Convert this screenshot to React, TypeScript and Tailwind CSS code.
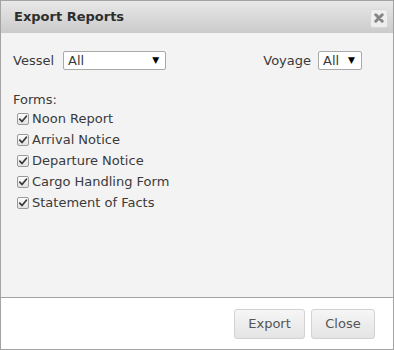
import React from 'react';

const forms = ['Noon Report', 'Arrival Notice', 'Departure Notice', 'Cargo Handling Form', 'Statement of Facts'];

const Check: React.FC = () => (
  <span className="w-[12px] h-[12px] rounded-[2px] border border-[#9a9a9a] bg-gradient-to-b from-[#fdfdfd] to-[#e2e2e2] flex items-center justify-center shrink-0">
    <svg width="10" height="10" viewBox="0 0 10 10">
      <path d="M1.8 5.2 L4 7.5 L8.4 2.2" fill="none" stroke="#3a3a3a" strokeWidth="1.8" strokeLinecap="round" strokeLinejoin="round" />
    </svg>
  </span>
);

const Select: React.FC<{ width: string }> = ({ width }) => (
  <div className={`${width} h-[19px] bg-white border border-[#a9a9a9] rounded-[2px] flex items-center justify-between pl-[4px] pr-[6px] text-[#3a3a3a]`}>
    <span>All</span>
    <span className="text-[9px] text-black leading-none">▼</span>
  </div>
);

export default function App() {
  return (
    <div className="w-[394px] h-[350px] border border-[#a3a3a3] flex flex-col font-['DejaVu_Sans',sans-serif] text-[13px] text-[#3a3a3a]">
      <div className="h-[32px] shrink-0 bg-gradient-to-b from-[#e8e8e8] to-[#cbcbcb] flex items-center justify-between pl-[13px] pr-[5px]">
        <span className="font-bold text-[#2e2e2e]">Export Reports</span>
        <div className="w-[18px] h-[19px] mt-[2px] rounded-[3px] border border-[#d8d8d8] bg-[#eeeeee] flex items-center justify-center">
          <svg width="10" height="10" viewBox="0 0 10 10">
            <path d="M1.8 1.8 L8.2 8.2 M8.2 1.8 L1.8 8.2" stroke="#858585" strokeWidth="3" strokeLinecap="round" />
          </svg>
        </div>
      </div>
      <div className="flex-1 bg-[#f3f3f3] pl-[12px] pr-[31px] pt-[18px]">
        <div className="flex items-center justify-between h-[19px]">
          <div className="flex items-center gap-[9px]">
            <span>Vessel</span>
            <Select width="w-[103px]" />
          </div>
          <div className="flex items-center gap-[7px]">
            <span>Voyage</span>
            <Select width="w-[44px]" />
          </div>
        </div>
        <div className="mt-[22px] leading-[16px]">Forms:</div>
        <div className="pl-[4px] flex flex-col">
          {forms.map((f) => (
            <div key={f} className="h-[21px] flex items-center gap-[3px]">
              <Check />
              <span>{f}</span>
            </div>
          ))}
        </div>
      </div>
      <div className="h-[52px] shrink-0 border-t border-[#a3a3a3] bg-white flex items-center justify-end gap-[6px] pr-[18px] pt-[1px]">
        <button className="w-[71px] h-[30px] rounded-[3px] border border-[#d2d2d2] bg-gradient-to-b from-[#f6f6f6] to-[#e4e4e4] text-[#555]">Export</button>
        <button className="w-[64px] h-[30px] rounded-[3px] border border-[#d2d2d2] bg-gradient-to-b from-[#f6f6f6] to-[#e4e4e4] text-[#555]">Close</button>
      </div>
    </div>
  );
}
